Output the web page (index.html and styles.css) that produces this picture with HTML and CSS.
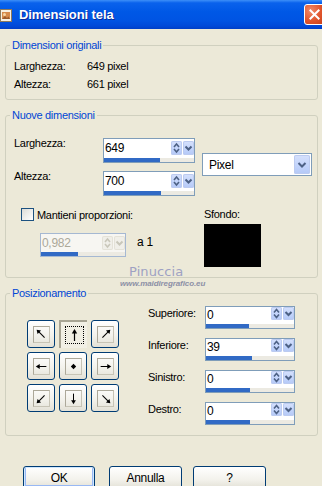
FILE: index.html
```html
<!DOCTYPE html>
<html lang="it">
<head>
    <meta charset="UTF-8">
    <title>Dimensioni tela</title>
    <link rel="stylesheet" href="styles.css">
</head>
<body>
    <div class="titlebar">
        <svg class="title-icon" width="13" height="15" viewBox="0 0 13 15">
            <rect x="0.5" y="1.5" width="11" height="12" fill="#f7f0e2" stroke="#8c7a5c"/>
            <rect x="2" y="4" width="8" height="7" fill="#d58a4c"/>
            <circle cx="4.5" cy="6.5" r="1.5" fill="#f6d7a6"/>
            <path d="M2 11 L5 8 L7 10 L8.5 8.5 L10 11 Z" fill="#9a5a2c"/>
        </svg>
        <span class="title">Dimensioni tela</span>
        <span class="close">
            <svg width="21" height="21" viewBox="0 0 21 21">
                <path d="M6 6 L15 15 M15 6 L6 15" stroke="#fff" stroke-width="2.2" stroke-linecap="square"/>
            </svg>
        </span>
    </div>

    <!-- original size -->
    <fieldset class="group group-orig">
        <legend>Dimensioni originali</legend>
        <div class="info-row"><span class="info-label">Larghezza:</span><span>649 pixel</span></div>
        <div class="info-row"><span class="info-label">Altezza:</span><span>661 pixel</span></div>
    </fieldset>

    <!-- new size -->
    <fieldset class="group group-new">
        <legend>Nuove dimensioni</legend>
        <div class="size-grid">
            <span class="field-label">Larghezza:</span>
            <div class="spin spin-tall">
                <div class="spin-top">
                    <span class="spin-value">649</span>
                    <span class="spin-btn"><svg width="11" height="14" viewBox="0 0 11 14"><path d="M3 6 L5.5 3 L8 6 M3 8 L5.5 11 L8 8" fill="none" stroke="#4d6185" stroke-width="1.6"/></svg></span>
                    <span class="spin-btn"><svg width="11" height="14" viewBox="0 0 11 14"><path d="M2.5 5.5 L5.5 8.5 L8.5 5.5" fill="none" stroke="#4d6185" stroke-width="2"/></svg></span>
                </div>
                <div class="spin-track"><div class="spin-fill" style="width: 62%"></div></div>
            </div>
            <div class="select">
                <span class="select-value">Pixel</span>
                <span class="select-btn"><svg width="16" height="19" viewBox="0 0 16 19"><path d="M4.5 8 L8 11.5 L11.5 8" fill="none" stroke="#4d6185" stroke-width="2"/></svg></span>
            </div>
            <span class="field-label">Altezza:</span>
            <div class="spin spin-tall">
                <div class="spin-top">
                    <span class="spin-value">700</span>
                    <span class="spin-btn"><svg width="11" height="14" viewBox="0 0 11 14"><path d="M3 6 L5.5 3 L8 6 M3 8 L5.5 11 L8 8" fill="none" stroke="#4d6185" stroke-width="1.6"/></svg></span>
                    <span class="spin-btn"><svg width="11" height="14" viewBox="0 0 11 14"><path d="M2.5 5.5 L5.5 8.5 L8.5 5.5" fill="none" stroke="#4d6185" stroke-width="2"/></svg></span>
                </div>
                <div class="spin-track"><div class="spin-fill" style="width: 63%"></div></div>
            </div>
        </div>

        <div class="ratio-area">
            <div class="ratio-left">
                <div class="check-row"><span class="checkbox"></span><span>Mantieni proporzioni:</span></div>
                <div class="ratio-row">
                    <div class="spin spin-disabled">
                        <div class="spin-top">
                            <span class="spin-value">0,982</span>
                            <span class="spin-btn"><svg width="11" height="14" viewBox="0 0 11 14"><path d="M3 6 L5.5 3 L8 6 M3 8 L5.5 11 L8 8" fill="none" stroke="#c9c7ba" stroke-width="1.6"/></svg></span>
                            <span class="spin-btn"><svg width="11" height="14" viewBox="0 0 11 14"><path d="M2.5 5.5 L5.5 8.5 L8.5 5.5" fill="none" stroke="#c9c7ba" stroke-width="2"/></svg></span>
                        </div>
                        <div class="spin-track"><div class="spin-fill" style="width: 44%"></div></div>
                    </div>
                    <span class="ratio-text">a 1</span>
                </div>
            </div>
            <div class="bg-col">
                <span class="bg-label">Sfondo:</span>
                <div class="swatch"></div>
            </div>
        </div>
    </fieldset>

    <!-- placement -->
    <fieldset class="group group-pos">
        <legend>Posizionamento</legend>
        <div class="pos-body">
            <div class="anchor-grid">
                <span class="anchor"><svg class="anchor-icon" width="17" height="17" viewBox="0 0 17 17"><path d="M5 5 L12 12" stroke="#000" stroke-width="1.2"/><polygon points="3,3 8,4 4,8" fill="#000"/></svg></span>
                <span class="anchor anchor-active"><span class="focus-box"><svg width="9" height="14" viewBox="0 0 9 14"><path d="M4.5 4 V13" stroke="#000" stroke-width="1.2"/><polygon points="4.5,1 1.8,5.5 7.2,5.5" fill="#000"/></svg></span></span>
                <span class="anchor"><svg class="anchor-icon" width="17" height="17" viewBox="0 0 17 17"><path d="M12 5 L5 12" stroke="#000" stroke-width="1.2"/><polygon points="14,3 9,4 13,8" fill="#000"/></svg></span>
                <span class="anchor"><svg class="anchor-icon" width="17" height="17" viewBox="0 0 17 17"><path d="M5 8.5 H14" stroke="#000" stroke-width="1.2"/><polygon points="2,8.5 6.5,5.8 6.5,11.2" fill="#000"/></svg></span>
                <span class="anchor"><svg class="anchor-icon" width="17" height="17" viewBox="0 0 17 17"><polygon points="8.5,5.5 11.5,8.5 8.5,11.5 5.5,8.5" fill="#000"/></svg></span>
                <span class="anchor"><svg class="anchor-icon" width="17" height="17" viewBox="0 0 17 17"><path d="M3 8.5 H12" stroke="#000" stroke-width="1.2"/><polygon points="15,8.5 10.5,5.8 10.5,11.2" fill="#000"/></svg></span>
                <span class="anchor"><svg class="anchor-icon" width="17" height="17" viewBox="0 0 17 17"><path d="M12 5 L5 12" stroke="#000" stroke-width="1.2"/><polygon points="3,14 4,9 8,13" fill="#000"/></svg></span>
                <span class="anchor"><svg class="anchor-icon" width="17" height="17" viewBox="0 0 17 17"><path d="M8.5 3 V12" stroke="#000" stroke-width="1.2"/><polygon points="8.5,15 5.8,10.5 11.2,10.5" fill="#000"/></svg></span>
                <span class="anchor"><svg class="anchor-icon" width="17" height="17" viewBox="0 0 17 17"><path d="M5 5 L12 12" stroke="#000" stroke-width="1.2"/><polygon points="14,14 9,13 13,9" fill="#000"/></svg></span>
            </div>
            <div class="offsets">
                <span class="offset-label">Superiore:</span>
                <div class="spin">
                    <div class="spin-top">
                        <span class="spin-value">0</span>
                        <span class="spin-btn"><svg width="11" height="13" viewBox="0 0 11 13"><path d="M3 5.5 L5.5 2.5 L8 5.5 M3 7.5 L5.5 10.5 L8 7.5" fill="none" stroke="#4d6185" stroke-width="1.6"/></svg></span>
                        <span class="spin-btn"><svg width="11" height="13" viewBox="0 0 11 13"><path d="M2.5 5 L5.5 8 L8.5 5" fill="none" stroke="#4d6185" stroke-width="2"/></svg></span>
                    </div>
                    <div class="spin-track"><div class="spin-fill" style="width: 49%"></div></div>
                </div>
                <span class="offset-label">Inferiore:</span>
                <div class="spin">
                    <div class="spin-top">
                        <span class="spin-value">39</span>
                        <span class="spin-btn"><svg width="11" height="13" viewBox="0 0 11 13"><path d="M3 5.5 L5.5 2.5 L8 5.5 M3 7.5 L5.5 10.5 L8 7.5" fill="none" stroke="#4d6185" stroke-width="1.6"/></svg></span>
                        <span class="spin-btn"><svg width="11" height="13" viewBox="0 0 11 13"><path d="M2.5 5 L5.5 8 L8.5 5" fill="none" stroke="#4d6185" stroke-width="2"/></svg></span>
                    </div>
                    <div class="spin-track"><div class="spin-fill" style="width: 52%"></div></div>
                </div>
                <span class="offset-label">Sinistro:</span>
                <div class="spin">
                    <div class="spin-top">
                        <span class="spin-value">0</span>
                        <span class="spin-btn"><svg width="11" height="13" viewBox="0 0 11 13"><path d="M3 5.5 L5.5 2.5 L8 5.5 M3 7.5 L5.5 10.5 L8 7.5" fill="none" stroke="#4d6185" stroke-width="1.6"/></svg></span>
                        <span class="spin-btn"><svg width="11" height="13" viewBox="0 0 11 13"><path d="M2.5 5 L5.5 8 L8.5 5" fill="none" stroke="#4d6185" stroke-width="2"/></svg></span>
                    </div>
                    <div class="spin-track"><div class="spin-fill" style="width: 50%"></div></div>
                </div>
                <span class="offset-label">Destro:</span>
                <div class="spin">
                    <div class="spin-top">
                        <span class="spin-value">0</span>
                        <span class="spin-btn"><svg width="11" height="13" viewBox="0 0 11 13"><path d="M3 5.5 L5.5 2.5 L8 5.5 M3 7.5 L5.5 10.5 L8 7.5" fill="none" stroke="#4d6185" stroke-width="1.6"/></svg></span>
                        <span class="spin-btn"><svg width="11" height="13" viewBox="0 0 11 13"><path d="M2.5 5 L5.5 8 L8.5 5" fill="none" stroke="#4d6185" stroke-width="2"/></svg></span>
                    </div>
                    <div class="spin-track"><div class="spin-fill" style="width: 50%"></div></div>
                </div>
            </div>
        </div>
    </fieldset>

    <div class="watermark">
        <span class="wm-name">Pinuccia</span>
        <span class="wm-site">www.maidiregrafico.eu</span>
    </div>

    <div class="actions">
        <button class="btn btn-default">OK</button>
        <button class="btn btn-cancel">Annulla</button>
        <button class="btn btn-help">?</button>
    </div>
</body>
</html>
```

FILE: styles.css
```css
body {
    margin: 0;
    width: 322px;
    height: 486px;
    overflow: hidden;
    position: relative;
    background-color: #ece9d8;
    font-family: 'Liberation Sans', Arial, sans-serif;
    font-size: 11px;
    letter-spacing: -0.3px;
    color: #000;
}

/* window caption */
.titlebar {
    height: 29px;
    display: flex;
    align-items: center;
    overflow: hidden;
    background: linear-gradient(to bottom, #3d8ff8 0%, #0a62ec 10%, #0058e6 40%, #0054e3 70%, #0049d8 90%, #003fc6 100%);
}

.title-icon {
    flex: none;
    margin-top: 1px;
}

.title {
    margin-left: 6px;
    color: #fff;
    font-size: 13px;
    font-weight: bold;
    letter-spacing: -0.1px;
    text-shadow: 1px 1px 0 #0a2a9a;
}

.close {
    flex: none;
    margin-left: auto;
    margin-right: -3px;
    width: 21px;
    height: 21px;
    box-sizing: border-box;
    border: 1px solid #fff;
    border-radius: 3px;
    background: radial-gradient(circle at 30% 30%, #f08a6a, #e0542b 55%, #c73e18);
    display: flex;
    align-items: center;
    justify-content: center;
}

.close svg {
    width: 19px;
    height: 19px;
}

/* group boxes */
.group {
    margin: 0 4px 0 5px;
    padding: 0 5px 0 8px;
    border: 1px solid #d0d0bf;
    border-radius: 3px;
    min-width: 0;
}

.group legend {
    padding: 0 2px;
    margin-left: -4px;
    color: #0046d5;
    line-height: 14px;
}

.group-orig {
    margin-top: 9px;
    padding-top: 5px;
    padding-bottom: 6px;
}

.info-row {
    display: flex;
    line-height: 18px;
}

.info-label {
    width: 73px;
}

.group-new {
    margin-top: 8px;
    padding-bottom: 10px;
}

.size-grid {
    margin-top: 16px;
    display: grid;
    grid-template-columns: 82px 92px 110px;
    grid-template-rows: 25px 25px;
    column-gap: 7px;
    row-gap: 8px;
}

.field-label {
    line-height: 13px;
    margin-top: -1px;
}

.select {
    grid-column: 3;
    grid-row: 1 / span 2;
    align-self: start;
    margin-top: 15px;
    height: 23px;
    box-sizing: border-box;
    border: 1px solid #7f9db9;
    background-color: #fff;
    display: flex;
    align-items: center;
}

.select-value {
    flex: 1;
    padding-left: 6px;
    font-size: 12px;
}

.select-btn {
    width: 16px;
    height: 19px;
    margin-right: 1px;
    border-radius: 2px;
    background: linear-gradient(to bottom, #d6e1fc, #c1d3fb 60%, #b4c8f6);
    box-shadow: inset 0 0 0 1px #bccbf0;
}

.select-btn svg {
    display: block;
}

/* spin edit with slider bar */
.spin {
    height: 23px;
    box-sizing: border-box;
    border: 1px solid #7f9db9;
    background-color: #fff;
    display: flex;
    flex-direction: column;
}

.spin-tall {
    height: 25px;
}

.spin-top {
    flex: 1;
    display: flex;
    align-items: flex-start;
    min-height: 0;
}

.spin-value {
    flex: 1;
    padding-left: 1px;
    font-size: 12px;
    line-height: 15px;
    margin-top: 1px;
}

.spin-tall .spin-value {
    margin-top: 2px;
}

.spin-btn {
    width: 11px;
    height: 13px;
    margin-right: 1px;
    border-radius: 2px;
    background: linear-gradient(to bottom, #d6e1fc, #c1d3fb 60%, #b4c8f6);
    box-shadow: inset 0 0 0 1px #bccbf0;
}

.spin-btn + .spin-btn {
    margin-right: 0;
}

.spin-tall .spin-btn {
    height: 14px;
    margin-top: 2px;
}

.spin-btn svg {
    display: block;
}

.spin-track {
    height: 4px;
    background-color: #eceae2;
}

.spin-fill {
    height: 100%;
    background-color: #316ac5;
}

.spin-disabled {
    width: 86px;
    height: 24px;
    border-color: #a5b8d2;
    background-color: #f7f6f2;
}

.spin-disabled .spin-value {
    color: #aca899;
    margin-top: 2px;
}

.spin-disabled .spin-btn {
    height: 14px;
    margin-top: 2px;
    background: #f0efe9;
    box-shadow: inset 0 0 0 1px #e4e2d8;
}

/* keep ratio + background */
.ratio-area {
    margin-top: 12px;
    display: grid;
    grid-template-columns: 190px 1fr;
}

.check-row {
    display: flex;
    align-items: center;
    height: 13px;
}

.checkbox {
    width: 13px;
    height: 13px;
    box-sizing: border-box;
    margin-left: 7px;
    margin-right: 3px;
    border: 1px solid #1c5180;
    background: linear-gradient(135deg, #dcdcd7, #fff);
}

.ratio-row {
    margin-top: 12px;
    margin-left: 26px;
    display: flex;
    align-items: flex-start;
}

.ratio-text {
    margin-left: 11px;
    margin-top: 3px;
    line-height: 13px;
    font-size: 12px;
}

.bg-label {
    display: block;
    line-height: 13px;
}

.swatch {
    margin-top: 3px;
    width: 57px;
    height: 43px;
    background-color: #000;
}

/* placement */
.group-pos {
    margin-top: 8px;
    padding-bottom: 10px;
}

.pos-body {
    display: flex;
    align-items: flex-start;
}

.anchor-grid {
    margin-top: 20px;
    margin-left: 13px;
    display: grid;
    grid-template-columns: repeat(3, 28px);
    grid-auto-rows: 28px;
    gap: 4px;
}

.anchor {
    box-sizing: border-box;
    border: 1px solid #003c74;
    border-radius: 3px;
    background: linear-gradient(to bottom, #fff, #f3f2ec 55%, #e3e1d6);
    display: flex;
    align-items: center;
    justify-content: center;
}

.anchor-icon {
    box-sizing: border-box;
    border: 1px solid #aca899;
    border-right-color: #c7c4b6;
    border-bottom-color: #c7c4b6;
}

.anchor-active {
    border: 0;
    border-radius: 0;
    border-top: 2px solid #a7a493;
    border-left: 2px solid #a7a493;
    background: #f1efe4;
}

.focus-box {
    width: 19px;
    height: 18px;
    box-sizing: border-box;
    border: 1px dotted #000;
    display: flex;
    align-items: center;
    justify-content: center;
}

.focus-box svg {
    display: block;
}

.offsets {
    margin-left: 29px;
    margin-top: 6px;
    display: grid;
    grid-template-columns: 57px 90px;
    grid-auto-rows: 23px;
    row-gap: 9px;
}

.offset-label {
    line-height: 13px;
    margin-top: 1px;
}

/* watermark over the frames */
.watermark {
    position: absolute;
    left: 120px;
    top: 264px;
    display: flex;
    flex-direction: column;
    align-items: flex-start;
    pointer-events: none;
}

.wm-name {
    font-family: 'DejaVu Sans', sans-serif;
    font-size: 13px;
    letter-spacing: 0.1px;
    line-height: 15px;
    color: #9ea1c3;
    margin-left: 9px;
}

.wm-site {
    font-size: 8px;
    font-weight: bold;
    font-style: italic;
    letter-spacing: -0.1px;
    line-height: 10px;
    color: #8c90a6;
}

/* dialog buttons */
.actions {
    margin-top: 30px;
    display: flex;
}

.btn {
    height: 23px;
    padding: 0;
    box-sizing: border-box;
    border: 1px solid #003c74;
    border-radius: 3px;
    background: linear-gradient(to bottom, #fff, #f3f2ec 60%, #e3e1d6);
    font-family: 'Liberation Sans', Arial, sans-serif;
    font-size: 12px;
    letter-spacing: -0.3px;
    color: #000;
}

.btn-default {
    width: 72px;
    margin-left: 23px;
    box-shadow: inset 0 0 0 1px #cee7ff, inset 0 -1px 0 2px #98b8f4;
}

.btn-cancel {
    width: 73px;
    margin-left: 14px;
}

.btn-help {
    width: 73px;
    margin-left: 11px;
}
```
